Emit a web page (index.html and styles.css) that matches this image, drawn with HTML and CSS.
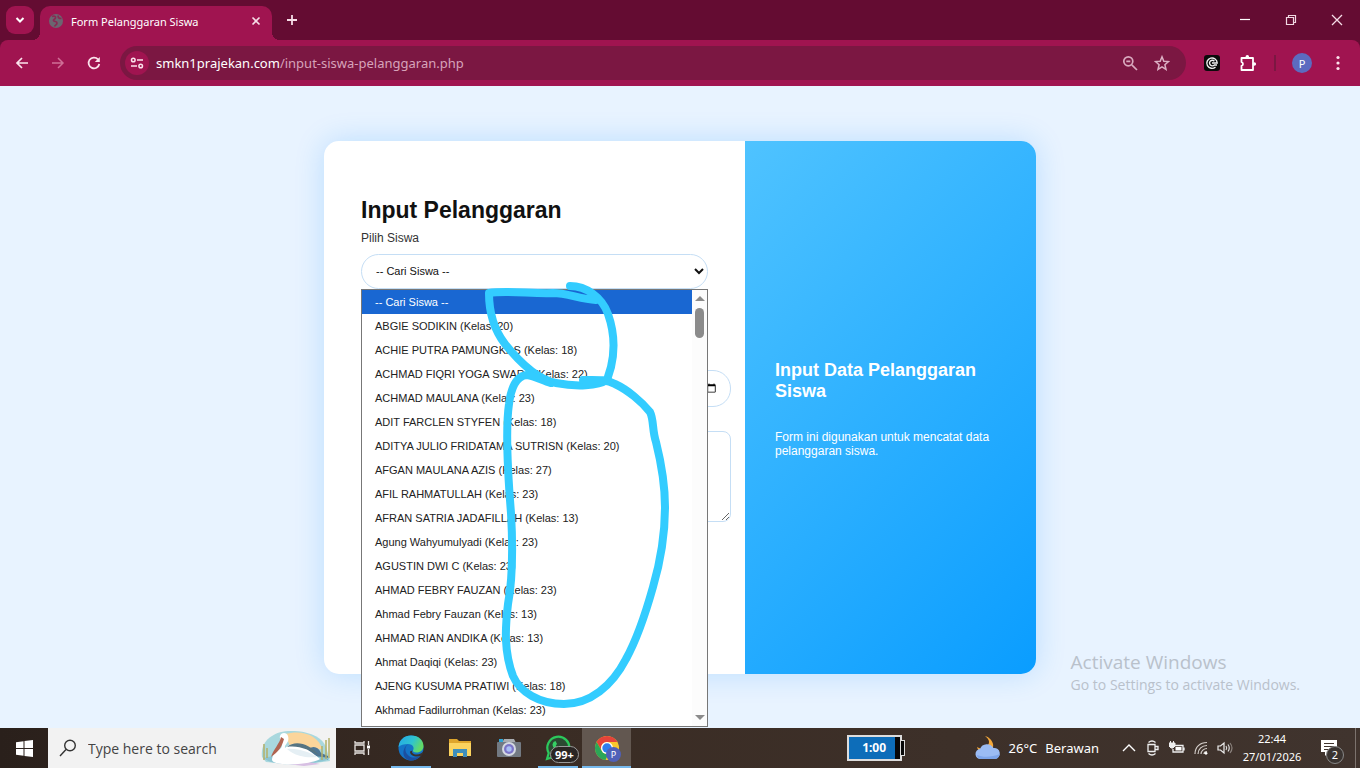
FILE: index.html
```html
<!DOCTYPE html>
<html lang="id">
<head>
    <meta charset="UTF-8">
    <meta name="viewport" content="width=device-width, initial-scale=1.0">
    <title>Form Pelanggaran Siswa</title>
    <link rel="stylesheet" href="styles.css">
</head>
<body>
    <header class="browser">
        <div class="tabbar">
            <button class="tab-search" aria-label="Cari tab">
                <svg width="10" height="10" viewBox="0 0 10 10"><path d="M1.5 3l3.5 3.5L8.500 3" fill="none" stroke="#fff" stroke-width="2"/></svg>
            </button>
            <div class="tab">
                <svg width="14" height="14" viewBox="0 0 14 14"><circle cx="7" cy="7" r="7" fill="#6b6570"/><path d="M3 2.500c2-1 4 0 3.500 1.500S4 5 4.500 6.500 8 7 8 9s-2 2-2.500 3.500M9.500 1.500c-1 1.500 0 3 3 3" fill="none" stroke="#8a2853" stroke-width="1.700"/></svg>
                <span class="tab-title">Form Pelanggaran Siswa</span>
                <button aria-label="Tutup tab">
                    <svg width="10" height="10" viewBox="0 0 10 10"><path d="M1.500 1.500l7 7M8.500 1.500l-7 7" stroke="#f6dde7" stroke-width="1.600"/></svg>
                </button>
            </div>
            <button class="new-tab" aria-label="Tab baru">
                <svg width="12" height="12" viewBox="0 0 12 12"><path d="M6 1v10M1 6h10" stroke="#f6dde7" stroke-width="1.800"/></svg>
            </button>
            <div class="window-btns">
                <button aria-label="Minimize"><svg width="12" height="12" viewBox="0 0 12 12"><path d="M1 5.500h10" stroke="#fff" stroke-width="1.200"/></svg></button>
                <button aria-label="Restore"><svg width="12" height="12" viewBox="0 0 12 12"><path d="M1.500 3.500h7v7h-7zM3.500 3.500v-2h7v7h-2" fill="none" stroke="#f1d8e2" stroke-width="1.200"/></svg></button>
                <button aria-label="Close"><svg width="12" height="12" viewBox="0 0 12 12"><path d="M1 1l10 10M11 1L1 11" stroke="#f6dde7" stroke-width="1.300"/></svg></button>
            </div>
        </div>
        <div class="toolbar">
            <button aria-label="Kembali"><svg width="14" height="14" viewBox="0 0 14 14"><path d="M13 7H2M7 2L2 7l5 5" fill="none" stroke="#fbe3ec" stroke-width="1.700"/></svg></button>
            <button aria-label="Maju"><svg width="14" height="14" viewBox="0 0 14 14"><path d="M1 7h11M7 2l5 5-5 5" fill="none" stroke="#cf6f96" stroke-width="1.500"/></svg></button>
            <button aria-label="Muat ulang"><svg width="14" height="14" viewBox="0 0 14 14"><path d="M12.300 8A5.400 5.400 0 1 1 11 3.300" fill="none" stroke="#fbe3ec" stroke-width="1.800"/><path d="M12.800 1v5H7.800z" fill="#fbe3ec"/></svg></button>
            <div class="address">
                <button class="site-info" aria-label="Info situs">
                    <svg width="14" height="14" viewBox="0 0 14 14"><g fill="none" stroke="#fbe3ec" stroke-width="1.500"><circle cx="3.300" cy="4" r="1.800"/><path d="M7 4h6M1 10h6"/><circle cx="10.700" cy="10" r="1.800"/></g></svg>
                </button>
                <a class="url" href="#"><b>smkn1prajekan.com</b>/input-siswa-pelanggaran.php</a>
                <button aria-label="Zoom"><svg width="16" height="16" viewBox="0 0 16 16"><g fill="none" stroke="#d9a9be" stroke-width="1.700"><circle cx="6.300" cy="6.300" r="4.500"/><path d="M9.800 9.800L15 15M4.300 6.300h4"/></g></svg></button>
                <button aria-label="Bookmark"><svg width="16" height="16" viewBox="0 0 16 16"><path d="M8 1.800l1.800 4.400 4.700.4-3.600 3.100 1.100 4.600L8 11.800l-4 2.500 1.100-4.600-3.600-3.100 4.700-.4z" fill="none" stroke="#dcb0c4" stroke-width="1.500"/></svg></button>
            </div>
            <div class="extensions">
                <button aria-label="Ekstensi C"><svg width="16" height="16" viewBox="0 0 16 16"><rect width="16" height="16" rx="3" fill="#0b0b0b"/><g fill="none" stroke="#f1f1f1" stroke-width="1.400"><path d="M11.500 12A5.200 5.200 0 1 1 13.200 8H8"/><path d="M10.400 6.200a2.800 2.800 0 1 0 0 3.800H13"/></g></svg></button>
                <button aria-label="Ekstensi"><svg width="18" height="18" viewBox="0 0 18 18"><path d="M2.500 4H14v12H2.500v-4.200a1.900 1.900 0 0 0 0-3.700z" fill="none" stroke="#fff" stroke-width="1.800" stroke-linejoin="round"/><circle cx="8.300" cy="2.900" r="1.800" fill="#fff"/><circle cx="15.300" cy="10" r="1.800" fill="#fff"/></svg></button>
                <i class="divider"></i>
                <button class="avatar" aria-label="Profil">P</button>
                <button class="menu" aria-label="Menu"><svg width="4" height="16" viewBox="0 0 4 16" fill="#fbe3ec"><circle cx="2" cy="2.500" r="1.600"/><circle cx="2" cy="8" r="1.600"/><circle cx="2" cy="13.500" r="1.600"/></svg></button>
            </div>
        </div>
    </header>

    <main class="page">
        <div class="card">
            <form class="form-side">
                <h2>Input Pelanggaran</h2>
                <label for="siswa">Pilih Siswa</label>
                <div class="select-box">
                    <select id="siswa">
                        <option>-- Cari Siswa --</option>
                    </select>
                    <div class="dropdown">
                        <ul role="listbox" aria-label="Pilih Siswa">
                            <li role="option" class="active" aria-selected="true">-- Cari Siswa --</li>
                            <li role="option">ABGIE SODIKIN (Kelas: 20)</li>
                            <li role="option">ACHIE PUTRA PAMUNGKAS (Kelas: 18)</li>
                            <li role="option">ACHMAD FIQRI YOGA SWARA (Kelas: 22)</li>
                            <li role="option">ACHMAD MAULANA (Kelas: 23)</li>
                            <li role="option">ADIT FARCLEN STYFEN (Kelas: 18)</li>
                            <li role="option">ADITYA JULIO FRIDATAMA SUTRISN (Kelas: 20)</li>
                            <li role="option">AFGAN MAULANA AZIS (Kelas: 27)</li>
                            <li role="option">AFIL RAHMATULLAH (Kelas: 23)</li>
                            <li role="option">AFRAN SATRIA JADAFILLAH (Kelas: 13)</li>
                            <li role="option">Agung Wahyumulyadi (Kelas: 23)</li>
                            <li role="option">AGUSTIN DWI C (Kelas: 23)</li>
                            <li role="option">AHMAD FEBRY FAUZAN (Kelas: 23)</li>
                            <li role="option">Ahmad Febry Fauzan (Kelas: 13)</li>
                            <li role="option">AHMAD RIAN ANDIKA (Kelas: 13)</li>
                            <li role="option">Ahmat Daqiqi (Kelas: 23)</li>
                            <li role="option">AJENG KUSUMA PRATIWI (Kelas: 18)</li>
                            <li role="option">Akhmad Fadilurrohman (Kelas: 23)</li>
                        </ul>
                        <div class="scrollbar">
                            <i class="arrow-up"></i>
                            <i class="thumb"></i>
                            <i class="arrow-down"></i>
                        </div>
                    </div>
                </div>
                <input type="date" class="tanggal" aria-label="Tanggal">
                <textarea class="keterangan" aria-label="Keterangan"></textarea>
            </form>
            <div class="info-side">
                <h3>Input Data Pelanggaran Siswa</h3>
                <p>Form ini digunakan untuk mencatat data pelanggaran siswa.</p>
            </div>
            <!-- coretan pena -->
            <svg class="coretan" viewBox="0 0 712 587">
                <path d="M246 145C262 145 278 156 284 173C290 190 291 209 287 226L283 239C274 245 252 246 232 242C211 238 193 218 181 203C171 190 165 172 165 152C182 149 209 153 229 152C243 152 256 158 272 159"/>
                <path d="M259 239C272 239 282 238 291 243C304 249 318 261 326 271C330 279 328 289 332 301C338 325 341 346 341 366C341 397 336 422 329 446C322 471 313 498 302 518C288 545 266 563 240 563C215 563 196 551 189 535C180 511 181 488 184 463C189 436 189 407 187 372C184 335 181 290 185 263C187 247 192 235 203 234C211 235 219 240 227 242"/>
            </svg>
        </div>
        <div class="watermark">
            <p class="wm-title">Activate Windows</p>
            <p>Go to Settings to activate Windows.</p>
        </div>
    </main>

    <footer class="taskbar">
        <button class="start" aria-label="Start">
            <svg width="17" height="17" viewBox="0 0 17 17" fill="#fff"><path d="M0 2.300L7.500 1.200V8H0zM8.500 1L17 0v8H8.500zM0 9h7.500v6.800L0 14.700zM8.500 9H17v8l-8.500-1z"/></svg>
        </button>
        <label class="search">
            <svg width="18" height="18" viewBox="0 0 18 18"><circle cx="11" cy="6.500" r="5.300" fill="none" stroke="#333" stroke-width="1.400"/><path d="M7 10.500L1 17" stroke="#333" stroke-width="1.400"/></svg>
            <input type="text" placeholder="Type here to search">
            <svg class="pelican" width="72" height="36" viewBox="0 0 72 36">
                <path d="M2 27C0 12 12 2 28 1c18-1 34 5 38 16l4 14-30 4L6 32z" fill="#a9d8de"/>
                <path d="M25 4c18-5 34 2 37 15l-30 2z" fill="#fbd59b"/>
                <path d="M44 23c6-8 14-8 17 0l7 3v4H44z" fill="#4d7695"/>
                <path d="M3 28c18-5 44-3 67 0-5 5-20 4-31 7-10-1-27 0-36-7z" fill="#8cc5d3"/>
                <path d="M18 33c14-3 30-2 42 1l-16 2z" fill="#d7bfe3"/>
                <path d="M12 30c1-10 10-9 10-15 0-4-3-5-2-9 1-4 7-4 8 0 2 7-4 8-3 12 7-6 15-4 22 1 6 5 9 6 13 10-10 6-46 8-48 1z" fill="#fff"/>
                <path d="M27 17c8-7 22-4 33 9-11-6-21-11-33-9z" fill="#567482"/>
                <path d="M27 19c11-1 22 3 30 8-9 1-21 0-30-8z" fill="#e5eff4"/>
                <path d="M21 7c-1 6-8 13-10 20 7-5 11-10 13-18z" fill="#b16450"/>
                <path d="M4 30V14M7 28V18M66 29V10M62 30V16M69 28V8" stroke="#b3b06a" stroke-width="1.500"/>
            </svg>
        </label>
        <div class="apps">
            <button aria-label="Task View"><svg width="18" height="16" viewBox="0 0 18 16"><path d="M2 1v2h9V1M2 15v-2h9v2M2 5h9v6H2zM15.500 1v4M15.500 9v6" fill="none" stroke="#e8e4e1" stroke-width="1.300"/><rect x="14" y="5.500" width="3" height="3" fill="#fff"/></svg></button>
            <button class="open" aria-label="Edge">
                <svg width="26" height="26" viewBox="0 0 26 26">
                    <defs><linearGradient id="edge" x1="0" y1="0" x2="1" y2=".4"><stop offset="0" stop-color="#24a7e8"/><stop offset=".6" stop-color="#2fc3d0"/><stop offset="1" stop-color="#62d967"/></linearGradient></defs>
                    <circle cx="13" cy="13" r="12.500" fill="#1473c7"/>
                    <path d="M.6 12C1 5 6 .5 13 .5c8 0 12.500 5 12.500 10.500 0 4-3 6.500-7 6.500-3 0-4-1-3.500-2.200 1.500-2 .5-6.300-5-6.300C6 9 2 10 .6 12z" fill="url(#edge)"/>
                    <path d="M10 9.500c-3 2-3.500 6-1 9.500 3 4.500 9 4.500 14 1.500-3 4-7 5.500-11 5-5-1-8-6-6-11 .8-2.500 2-4 4-5z" fill="#1b4fa0"/>
                    <path d="M14.500 15.500c-1.500 2 1 4 4 4 3.500 0 5.500-1.500 7-3.500l-1.500 4.500c-5 2-12 1-12-4z" fill="#3a302b"/>
                </svg>
            </button>
            <button aria-label="File Explorer"><svg width="22" height="20" viewBox="0 0 22 20"><path d="M0 1h8l2 2h12v15H0z" fill="#dea52c"/><path d="M0 5h22v13H0z" fill="#fbd35f"/><path d="M4 11h14v8h-4v-4H8v4H4z" fill="#3f8ebb"/></svg></button>
            <button aria-label="Camera"><svg width="24" height="20" viewBox="0 0 24 20"><path d="M7 1h10l2 4H5z" fill="#a9adb2"/><rect y="4" width="24" height="15" rx="1" fill="#737a83"/><rect x="2" y="1" width="4" height="3" fill="#2fa5d5"/><circle cx="12" cy="11" r="7" fill="#d5d9e2"/><circle cx="12" cy="11" r="5" fill="#7c75c8"/><circle cx="12" cy="11" r="2.700" fill="#a9bff5"/></svg></button>
            <button class="open" aria-label="WhatsApp">
                <svg width="26" height="26" viewBox="0 0 26 26"><path d="M2 24l1.700-6A11 11 0 1 1 8 22.300z" fill="#2b4a32" stroke="#2cc95c" stroke-width="2.200"/><path d="M8.500 7l2-1 1.500 3-1.200 1.500c1 2 2.500 3.200 4.200 4l1.500-1.300 2.500 1.500c0 2-2 3-4 2.500-4-1-7.500-5-7.500-8z" fill="#35cf63"/></svg>
                <span class="badge">99+</span>
            </button>
            <button class="open current" aria-label="Chrome">
                <svg width="26" height="26" viewBox="0 0 26 26">
                    <circle cx="13" cy="13" r="12" fill="#f9c72c"/>
                    <path d="M2.600 7A12 12 0 0 1 23.400 7H13a6 6 0 0 0-5.200 9z" fill="#e5433a"/>
                    <path d="M2.600 7l5.200 9c1 2 4 3.500 6.500 3L11.500 25A12 12 0 0 1 2.600 7z" fill="#2ca657"/>
                    <circle cx="13" cy="13" r="6" fill="#fff"/><circle cx="13" cy="13" r="4.700" fill="#2f7ded"/>
                </svg>
                <span class="profile">P</span>
            </button>
        </div>
        <div class="battery"><span>1:00</span></div>
        <div class="weather">
            <svg width="26" height="24" viewBox="0 0 26 24"><path d="M10 0c4 3 5 6 3 9-2 4-6 5-11 2 1 4 5 6 9 5 5 0 8-4 7-8-1-4-4-7-8-8z" fill="#f5a83a"/><path d="M6 23a5 5 0 0 1-1-10 7.500 7.500 0 0 1 13.500-1A5.500 5.500 0 0 1 20 23z" fill="#9bbcf4"/><path d="M2 19c7 3 15 2 23-1-1 3-2.500 5-5 5H6c-2 0-3.500-1-4-4z" fill="#7da5ea"/></svg>
            <span>26°C</span>
            <span>Berawan</span>
        </div>
        <div class="tray">
            <button aria-label="Ikon tersembunyi"><svg width="14" height="14" viewBox="0 0 14 14"><path d="M1 10l6-6 6 6" fill="none" stroke="#fff" stroke-width="1.400"/></svg></button>
            <button aria-label="Meet Now"><svg width="14" height="16" viewBox="0 0 14 16"><path d="M2 4.500h7v7H2zM9 6.500h3v3H9M2.500 2.500Q6-.5 9.500 2.500M2.500 13.500q3.500 3 7 0" fill="none" stroke="#eee" stroke-width="1.300"/></svg></button>
            <button aria-label="Baterai"><svg width="16" height="14" viewBox="0 0 16 14"><path d="M5 4.500h9v6.500H4V8M15 6.500v3" fill="none" stroke="#eee" stroke-width="1.300"/><rect x="6.500" y="6" width="6" height="3.500" fill="#fff"/><path d="M0 2h6v3L4 7H2L0 5zM1.500 0v2M4.500 0v2" fill="#eee" stroke="#eee"/></svg></button>
            <button aria-label="Wi-Fi"><svg width="14" height="14" viewBox="0 0 14 14"><g fill="none" stroke="#d5cfcb" stroke-width="1.200"><path d="M1 13C1 6 6 1.500 13 1.500M4 13c0-5 4-8.500 9-8.500M7 13c0-3 3-5.500 6-5.500M10 13c0-1.500 1.500-2.500 3-2.500"/></g><circle cx="12" cy="12.300" r="1.400" fill="#fff"/></svg></button>
            <button aria-label="Volume"><svg width="16" height="14" viewBox="0 0 16 14"><path d="M1 5h2.500L7 2v10L3.500 9H1z" fill="none" stroke="#eee" stroke-width="1.200"/><path d="M9 5q1.500 2 0 4M11 3.500q2.500 3.500 0 7" fill="none" stroke="#ddd" stroke-width="1.200"/><path d="M13 2q4 5 0 10" fill="none" stroke="#8b837e" stroke-width="1.200"/></svg></button>
        </div>
        <div class="clock"><span>22:44</span><span>27/01/2026</span></div>
        <button class="notif" aria-label="Notifikasi">
            <svg width="18" height="18" viewBox="0 0 18 18"><path d="M1 1h16v12H9l-4 4v-4H1z" fill="#fff"/><path d="M4 4.500h10M4 7.500h10M4 10.500h6" stroke="#40342e" stroke-width="1.200"/></svg>
            <span class="count">2</span>
        </button>
        <i class="show-desktop"></i>
    </footer>
</body>
</html>
```
FILE: styles.css
```css
*{
    margin: 0;
    padding: 0;
}
body{
    height: 100vh;
    display: flex;
    flex-direction: column;
    overflow: hidden;
    font-family: "Liberation Sans", Arial, sans-serif;
}
button{
    border: none;
    background: none;
    display: flex;
    justify-content: center;
    align-items: center;
    flex-shrink: 0;
    cursor: pointer;
}
svg{
    flex-shrink: 0;
}
/* browser */
.browser{
    background-color: #640c32;
    font-family: "Noto Sans", "Open Sans", sans-serif;
}
.tabbar{
    height: 40px;
    display: flex;
    align-items: center;
    padding-left: 6px;
}
.tab-search{
    width: 28px;
    height: 28px;
    border-radius: 9px;
    background-color: #a01450;
}
.tab{
    position: relative;
    align-self: flex-end;
    box-sizing: border-box;
    width: 232px;
    height: 34px;
    margin-left: 6px;
    padding: 0 11px 4px 9px;
    display: flex;
    align-items: center;
    gap: 8px;
    border-radius: 10px 10px 0 0;
    background-color: #a01450;
}
.tab::before,
.tab::after{
    content: "";
    position: absolute;
    bottom: 0;
    width: 8px;
    height: 8px;
}
.tab::before{
    left: -8px;
    background: radial-gradient(circle at 0 0, transparent 8px, #a01450 8px);
}
.tab::after{
    right: -8px;
    background: radial-gradient(circle at 100% 0, transparent 8px, #a01450 8px);
}
.tab-title{
    flex: 1;
    color: #fff;
    font-size: 11px;
    white-space: nowrap;
}
.new-tab{
    width: 40px;
}
.window-btns{
    display: flex;
    margin-left: auto;
}
.window-btns button{
    width: 46px;
}
.toolbar{
    height: 46px;
    display: flex;
    align-items: center;
    padding-left: 4px;
    border-radius: 8px 8px 0 0;
    background-color: #a01450;
}
.toolbar > button{
    width: 36px;
}
.address{
    flex: 1;
    height: 34px;
    display: flex;
    align-items: center;
    margin-left: 8px;
    padding: 0 8px 0 5px;
    border-radius: 17px;
    background-color: #7b1742;
}
.address button{
    width: 32px;
}
.address .site-info{
    width: 24px;
    height: 24px;
    border-radius: 12px;
    background-color: #a01450;
}
.url{
    flex: 1;
    margin-left: 7px;
    color: #d7a3ba;
    font-size: 13px;
    text-decoration: none;
}
.url b{
    color: #fff;
    font-weight: normal;
}
.extensions{
    display: flex;
    align-items: center;
    padding: 0 4px 0 8px;
}
.extensions button{
    width: 36px;
}
.divider{
    width: 2px;
    height: 16px;
    margin: 0 8px;
    background-color: #7b1742;
}
.extensions .avatar{
    width: 20px;
    height: 20px;
    margin: 0 8px;
    border-radius: 10px;
    background-color: #5c6bc0;
    color: #fff;
    font-family: inherit;
    font-size: 11px;
}
/* halaman */
.page{
    position: relative;
    flex: 1;
    display: flex;
    justify-content: center;
    align-items: center;
    background-color: #e8f3ff;
}
.card{
    position: relative;
    display: flex;
    width: 712px;
    height: 533px;
    border-radius: 15px;
    background-color: #fff;
    box-shadow: 0 0 30px rgba(0, 140, 255, 0.2);
}
.form-side{
    flex: 1;
    padding: 55px 37px;
}
.form-side h2{
    font-size: 23px;
    line-height: 28px;
    color: #111;
}
.form-side label{
    display: block;
    margin: 7px 0 9px;
    font-size: 12px;
    line-height: 14px;
    color: #333;
}
.select-box{
    position: relative;
    height: 35px;
}
.select-box select{
    width: 100%;
    height: 35px;
    padding: 0 0 0 10px;
    border: 1px solid #c5def5;
    border-radius: 18px;
    background-color: #fff;
    font-family: inherit;
    font-size: 11px;
    color: #111;
}
.dropdown{
    position: absolute;
    z-index: 2;
    top: 100%;
    left: 0;
    box-sizing: border-box;
    width: 100%;
    height: 438px;
    display: flex;
    border: 1px solid #777;
    background-color: #fff;
}
.dropdown ul{
    flex: 1;
    list-style: none;
}
.dropdown li{
    padding-left: 13px;
    font-size: 11px;
    line-height: 24px;
    color: #222;
    white-space: nowrap;
}
.dropdown li.active{
    background-color: #1967d2;
    color: #fff;
}
.scrollbar{
    width: 15px;
    display: flex;
    flex-direction: column;
    align-items: center;
    padding: 6px 0;
    box-sizing: border-box;
    background-color: #fcfcfc;
}
.arrow-up,
.arrow-down{
    border: 5px solid transparent;
    border-top: none;
    border-bottom-color: #8b8b8b;
}
.arrow-down{
    margin-top: auto;
    border-top: 5px solid #8b8b8b;
    border-bottom: none;
}
.thumb{
    width: 9px;
    height: 30px;
    margin-top: 7px;
    border-radius: 5px;
    background-color: #8b8b8b;
}
.tanggal,
.keterangan{
    display: block;
    width: 100%;
    padding: 10px 11px 10px 10px;
    border: 1px solid #c5def5;
    background-color: #fff;
    font-family: inherit;
    font-size: 11px;
}
.tanggal{
    height: 15px;
    margin-top: 81px;
    border-radius: 18px;
}
.keterangan{
    height: 69px;
    margin-top: 24px;
    border-radius: 8px;
}
.info-side{
    box-sizing: border-box;
    width: 291px;
    padding: 3px 30px 0;
    display: flex;
    flex-direction: column;
    justify-content: center;
    gap: 28px;
    border-radius: 0 15px 15px 0;
    background: linear-gradient(135deg, #4fc3ff, #0a9dff);
    color: #fff;
}
.info-side h3{
    font-size: 18px;
    line-height: 21px;
}
.info-side p{
    font-size: 12px;
    line-height: 14px;
}
.coretan{
    position: absolute;
    z-index: 3;
    top: 0;
    left: 0;
    width: 712px;
    height: 587px;
    fill: none;
    stroke: #33ccff;
    stroke-width: 8;
    stroke-linecap: round;
    stroke-linejoin: round;
    pointer-events: none;
}
.watermark{
    position: absolute;
    right: 60px;
    bottom: 33px;
    font-family: "Open Sans", "Noto Sans", sans-serif;
    font-size: 14px;
    line-height: 20px;
    color: #b9c1cb;
}
.wm-title{
    font-size: 19px;
    line-height: 25px;
}
/* taskbar */
.taskbar{
    position: relative;
    z-index: 1;
    height: 40px;
    display: flex;
    align-items: center;
    background: linear-gradient(90deg, #2a201b, #3a2c24 40%, #40342e);
    font-family: "Noto Sans", "Open Sans", sans-serif;
    color: #fff;
}
.start{
    width: 48px;
}
.search{
    box-sizing: border-box;
    width: 288px;
    height: 40px;
    display: flex;
    align-items: center;
    gap: 11px;
    padding: 0 4px 0 11px;
    background-color: #f2f2f2;
}
.search input{
    flex: 1;
    min-width: 0;
    border: none;
    background: none;
    font-family: "Open Sans", sans-serif;
    font-size: 14px;
}
.search input::placeholder{
    color: #444;
}
.apps{
    display: flex;
    align-self: stretch;
    padding-left: 1px;
}
.apps button{
    position: relative;
    width: 49px;
}
.apps .open::after{
    content: "";
    position: absolute;
    bottom: 0;
    width: 40px;
    height: 2px;
    background-color: #76b9ed;
}
.apps .current{
    background-color: #625750;
}
.apps .current::after{
    width: 100%;
}
.badge{
    position: absolute;
    top: 18px;
    left: 17px;
    padding: 0 4px;
    border: 1px solid #999;
    border-radius: 9px;
    background-color: #2b2624;
    color: #fff;
    font-family: "Noto Sans", sans-serif;
    font-size: 11px;
    font-weight: bold;
    line-height: 15px;
}
.profile{
    position: absolute;
    right: 10px;
    bottom: 6px;
    width: 15px;
    border-radius: 8px;
    background-color: #5060b8;
    color: #fff;
    font-family: "Noto Sans", sans-serif;
    font-size: 9px;
    line-height: 15px;
}
.battery{
    position: relative;
    box-sizing: border-box;
    width: 55px;
    height: 26px;
    margin-left: auto;
    margin-right: 73px;
    border: 2px solid #ddd;
    background: linear-gradient(90deg, #0d6db9 46px, #080808 46px);
    font-size: 12px;
    font-weight: bold;
    line-height: 22px;
    text-align: center;
}
.battery::after{
    content: "";
    position: absolute;
    top: 3px;
    right: -5px;
    width: 3px;
    height: 14px;
    border: 1px solid #ddd;
    border-left: none;
    background-color: #080808;
}
.weather{
    display: flex;
    align-items: center;
    gap: 8px;
    margin-right: 18px;
    font-size: 13px;
}
.tray{
    display: flex;
}
.tray button{
    width: 24px;
}
.clock{
    display: flex;
    flex-direction: column;
    width: 70px;
    font-size: 11px;
    line-height: 18px;
    text-align: center;
}
.notif{
    position: relative;
    width: 44px;
    height: 40px;
}
.count{
    position: absolute;
    top: 18px;
    left: 19px;
    width: 16px;
    border: 1px solid #888;
    border-radius: 9px;
    background-color: #3a3431;
    color: #fff;
    font-family: "Noto Sans", sans-serif;
    font-size: 11px;
    line-height: 16px;
}
.show-desktop{
    width: 4px;
    height: 40px;
    margin-left: 4px;
    border-left: 1px solid #7c736e;
}
```
